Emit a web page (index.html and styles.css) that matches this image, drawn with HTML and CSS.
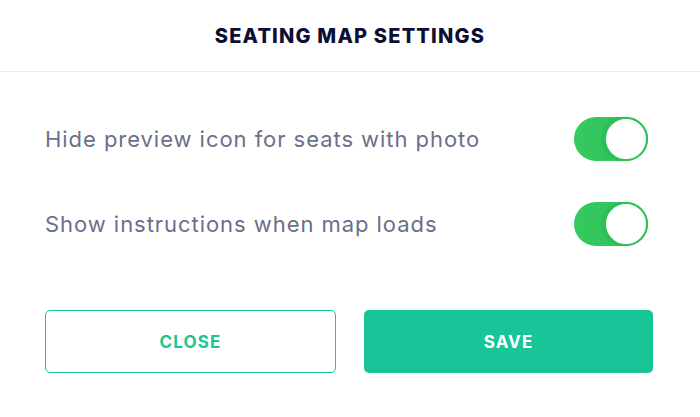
FILE: index.html
```html
<!DOCTYPE html>
<html>
<head>
<meta charset="utf-8">
<link rel="stylesheet" href="styles.css">
</head>
<body>
<div class="dialog">
  <div class="header"><h1 class="title">SEATING MAP SETTINGS</h1></div>
  <div class="body">
    <div class="row">
      <span class="label">Hide preview icon for seats with photo</span>
      <span class="toggle"><span class="knob"></span></span>
    </div>
    <div class="row">
      <span class="label">Show instructions when map loads</span>
      <span class="toggle"><span class="knob"></span></span>
    </div>
  </div>
  <div class="actions">
    <button class="btn btn-outline">CLOSE</button>
    <button class="btn btn-fill">SAVE</button>
  </div>
</div>
</body>
</html>
```
FILE: styles.css
```css
html, body { margin: 0; padding: 0; background: #fff; }
body { font-family: Inter, "Noto Sans", sans-serif; width: 700px; height: 417px; overflow: hidden; }
.dialog { display: flex; flex-direction: column; }
.header { height: 72px; border-bottom: 1.5px solid #ebebeb; display: flex; align-items: center; justify-content: center; box-sizing: border-box; }
.title { margin: 0; font-size: 20px; font-weight: 800; color: #0c0f33; letter-spacing: 1.2px; }
.body { padding: 45px 52px 0 45px; display: flex; flex-direction: column; gap: 41px; }
.row { display: flex; align-items: center; justify-content: space-between; height: 44px; }
.label { font-size: 22px; color: #6b6f88; font-weight: 400; letter-spacing: 0.95px; }
.toggle { width: 74px; height: 44px; border-radius: 22px; background: linear-gradient(90deg, #35c95f, #2cc257); display: flex; justify-content: flex-end; box-sizing: border-box; }
.knob { width: 44px; height: 44px; border-radius: 50%; background: #fff; border: 2px solid #2cc257; box-sizing: border-box; box-shadow: -2px 0 3px rgba(0,0,0,0.08); }
.actions { display: flex; gap: 28px; padding: 64px 47px 0 45px; }
.btn { flex: 1; height: 63px; border-radius: 5px; font-family: inherit; font-size: 17px; font-weight: 700; letter-spacing: 1.1px; cursor: pointer; box-sizing: border-box; }
.btn-outline { background: #fff; border: 1.5px solid #1cc592; color: #1cc592; }
.btn-fill { background: #18c598; border: none; color: #fff; }
```
